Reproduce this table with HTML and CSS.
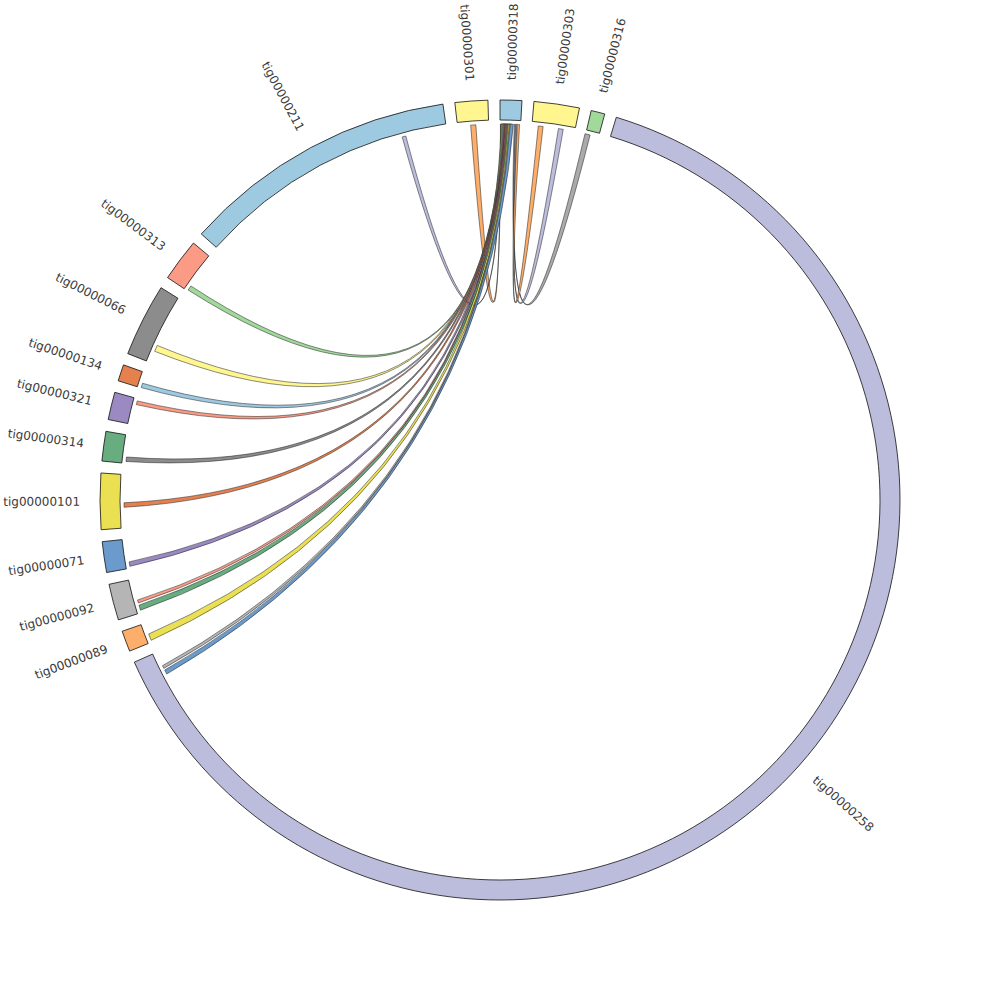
FILE: index.html
```html
<!DOCTYPE html>
<html>
<head>
<meta charset="utf-8">
<title>Contig chord diagram</title>
<link rel="stylesheet" href="styles.css">
</head>
<body>
<div class="chart">
  <svg id="chord" class="chord-svg" viewBox="0 0 1000 1000" width="1000" height="1000" xmlns="http://www.w3.org/2000/svg">
    <g id="ribbons"></g>
    <g id="arcs"></g>
    <g id="labels"></g>
  </svg>
</div>
<script src="chart.js"></script>
</body>
</html>
```

FILE: styles.css
```css
html, body {
  margin: 0;
  padding: 0;
  background: #ffffff;
}
.chart {
  width: 1000px;
  height: 1000px;
}
.chord-svg {
  display: block;
}
.seg {
  stroke: #111111;
  stroke-width: 0.8;
}
.ribbon {
  stroke: #1a1a1a;
  stroke-width: 0.5;
}
.label {
  font-family: "DejaVu Sans", Verdana, sans-serif;
  font-size: 12px;
  fill: #3a3a3a;
}
```

FILE: chart.js
```js
(function () {
  var NS = 'http://www.w3.org/2000/svg';
  var cx = 500, cy = 500, R1 = 380, R2 = 400, RC = 376, RL = 420, RB = 20;

  var segs = [
    ['tig00000318', 0.000, 0.055, '#9ecae1'],
    ['tig00000303', 0.085, 0.200, '#fff68f'],
    ['tig00000316', 0.230, 0.265, '#a1d99b'],
    ['tig00000258', 0.295, 4.295, '#bcbddc'],
    ['tig00000089', 4.325, 4.378, '#fdae6b'],
    ['tig00000092', 4.408, 4.500, '#b5b5b5'],
    ['tig00000071', 4.530, 4.608, '#6a9bcc'],
    ['tig00000101', 4.638, 4.780, '#ebe052'],
    ['tig00000314', 4.810, 4.885, '#67ad80'],
    ['tig00000321', 4.915, 4.985, '#9b89c2'],
    ['tig00000134', 5.015, 5.057, '#e5804f'],
    ['tig00000066', 5.087, 5.272, '#8c8c8c'],
    ['tig00000313', 5.302, 5.410, '#fb9a85'],
    ['tig00000211', 5.440, 6.140, '#9ecae1'],
    ['tig00000301', 6.170, 6.253, '#fff68f']
  ];

  // [targetStart, targetEnd, sourceStart, sourceWidth, colour] on tig00000318
  var chords = [
    [6.205, 6.219, 0.0012, 0.0020, '#fdae6b'],
    [6.020, 6.030, 0.0030, 0.0020, '#bcbddc'],
    [5.305, 5.318, 0.0030, 0.0060, '#a1d99b'],
    [5.119, 5.136, 0.0050, 0.0065, '#fff68f'],
    [5.016, 5.028, 0.0070, 0.0060, '#9ecae1'],
    [4.969, 4.979, 0.0090, 0.0060, '#fb9a85'],
    [4.815, 4.827, 0.0110, 0.0060, '#8c8c8c'],
    [4.693, 4.705, 0.0130, 0.0060, '#e5804f'],
    [4.535, 4.547, 0.0150, 0.0070, '#9b89c2'],
    [4.435, 4.443, 0.0175, 0.0060, '#fb9a85'],
    [4.415, 4.429, 0.0195, 0.0075, '#67ad80'],
    [4.330, 4.348, 0.0220, 0.0075, '#ebe052'],
    [4.248, 4.256, 0.0250, 0.0060, '#b5b5b5'],
    [4.231, 4.243, 0.0275, 0.0080, '#6a9bcc'],
    [0.228, 0.242, 0.0380, 0.0030, '#aaaaaa'],
    [0.156, 0.169, 0.0420, 0.0030, '#bcbddc'],
    [0.102, 0.115, 0.0460, 0.0060, '#fdae6b']
  ];

  function P(r, a) { return [cx + r * Math.sin(a), cy - r * Math.cos(a)]; }
  function f(p) { return p[0].toFixed(2) + ',' + p[1].toFixed(2); }
  function ctrl(a, b) {
    var d = b - a;
    while (d > Math.PI) d -= 2 * Math.PI;
    while (d < -Math.PI) d += 2 * Math.PI;
    return P(RB, a + d / 2);
  }
  function el(name, attrs) {
    var e = document.createElementNS(NS, name);
    for (var k in attrs) e.setAttribute(k, attrs[k]);
    return e;
  }

  var ribbons = document.getElementById('ribbons');
  var arcs = document.getElementById('arcs');
  var labels = document.getElementById('labels');

  chords.forEach(function (c) {
    var s0 = c[2], s1 = c[2] + c[3];
    var t0 = c[0], t1 = c[1];
    var d = 'M' + f(P(RC, s0)) +
      ' A' + RC + ',' + RC + ' 0 0 1 ' + f(P(RC, s1)) +
      ' Q' + f(ctrl(s1, t0)) + ' ' + f(P(RC, t0)) +
      ' A' + RC + ',' + RC + ' 0 0 1 ' + f(P(RC, t1)) +
      ' Q' + f(ctrl(t1, s0)) + ' ' + f(P(RC, s0)) + 'Z';
    ribbons.appendChild(el('path', { d: d, fill: c[4], 'class': 'ribbon' }));
  });

  segs.forEach(function (g) {
    var a0 = g[1], a1 = g[2];
    var large = (a1 - a0) > Math.PI ? 1 : 0;
    var d = 'M' + f(P(R2, a0)) +
      ' A' + R2 + ',' + R2 + ' 0 ' + large + ' 1 ' + f(P(R2, a1)) +
      ' L' + f(P(R1, a1)) +
      ' A' + R1 + ',' + R1 + ' 0 ' + large + ' 0 ' + f(P(R1, a0)) + 'Z';
    arcs.appendChild(el('path', { d: d, fill: g[3], 'class': 'seg' }));

    var m = (a0 + a1) / 2;
    var deg = m * 180 / Math.PI - 90;
    var flip = m > Math.PI;
    var grp = el('g', {
      transform: 'translate(' + cx + ',' + cy + ') rotate(' + deg.toFixed(3) + ') translate(' + RL + ',0)' + (flip ? ' rotate(180)' : '')
    });
    var t = el('text', { dy: '0.35em', 'class': 'label', 'text-anchor': flip ? 'end' : 'start' });
    t.textContent = g[0];
    grp.appendChild(t);
    labels.appendChild(grp);
  });
})();
```
